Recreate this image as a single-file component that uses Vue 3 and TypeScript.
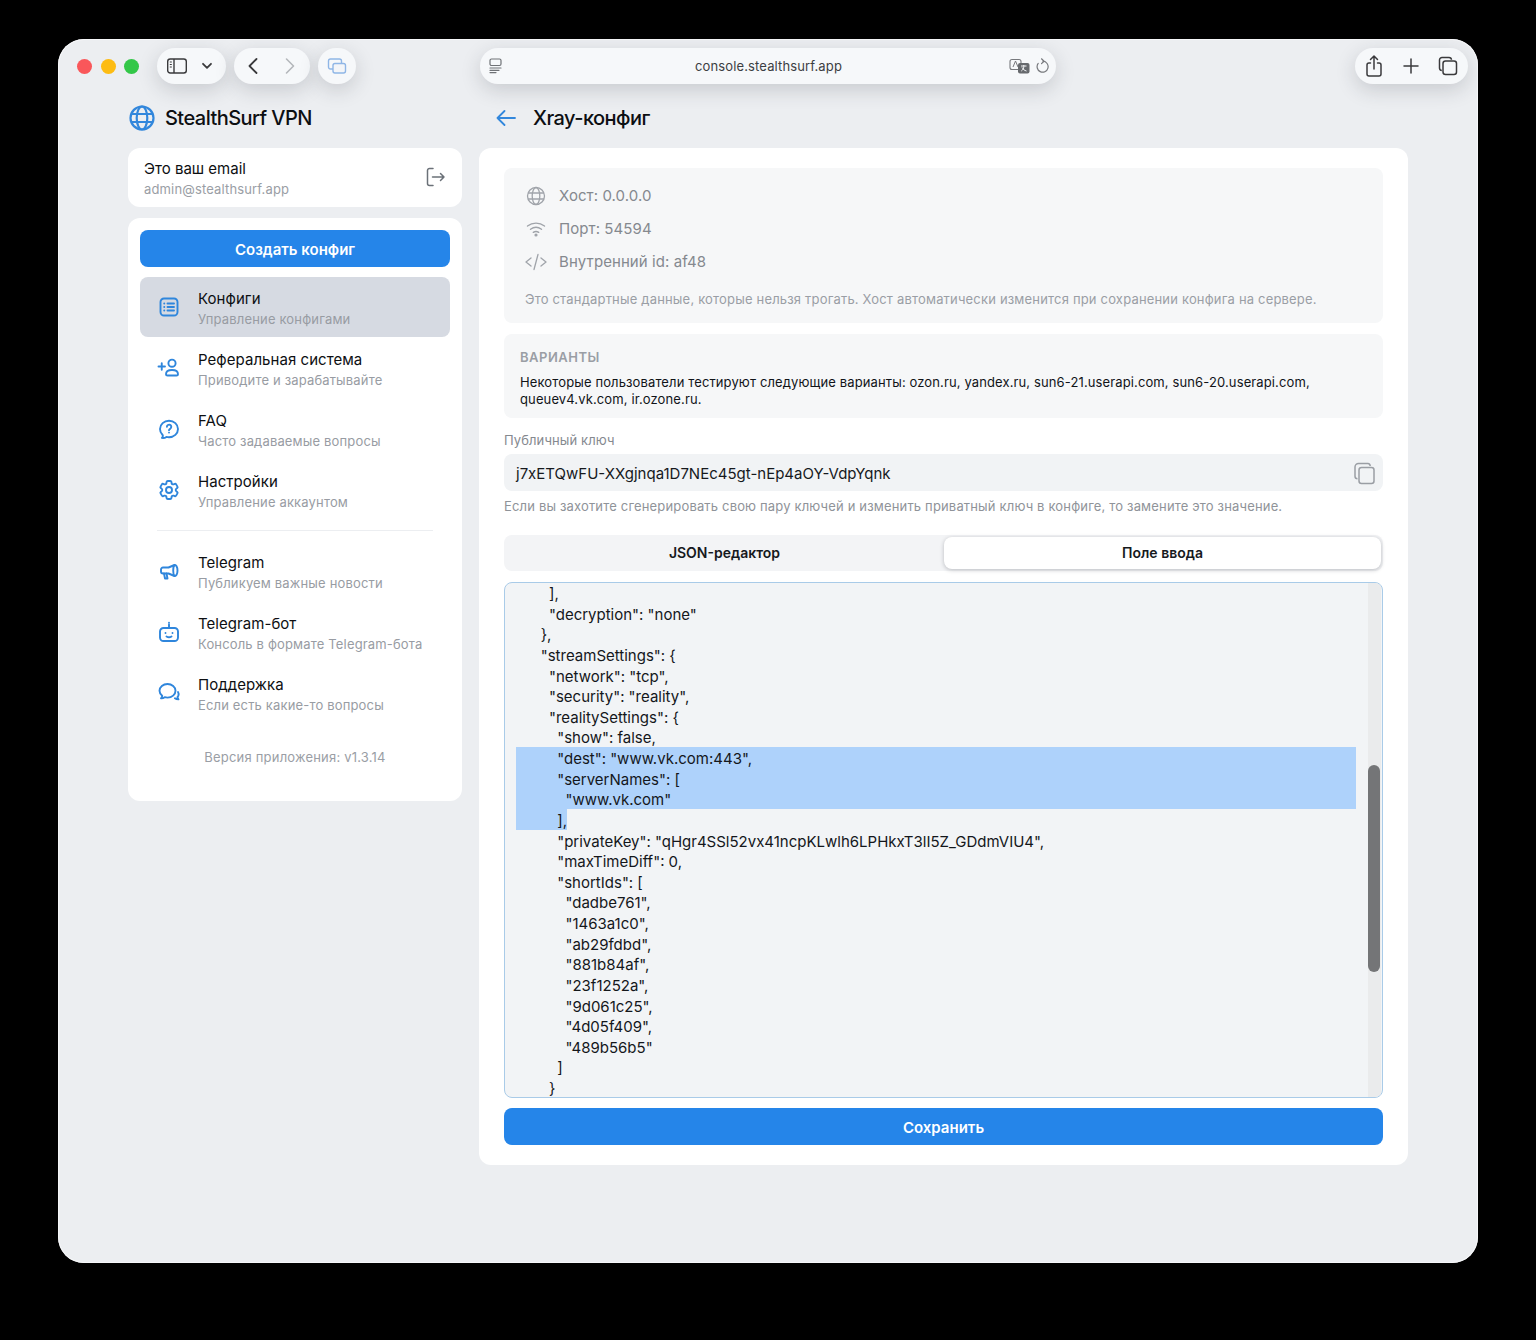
<script setup lang="ts">
interface NavItem {
  title: string
  sub: string
  paths: string[]
  active?: boolean
}

const cog =
  'M9.594 3.94c.09-.542.56-.94 1.11-.94h2.593c.55 0 1.02.398 1.11.94l.213 1.281c.063.374.313.686.645.87.074.04.147.083.22.127.324.196.72.257 1.075.124l1.217-.456a1.125 1.125 0 011.37.49l1.296 2.247a1.125 1.125 0 01-.26 1.431l-1.003.827c-.293.24-.438.613-.431.992a6.759 6.759 0 010 .255c-.007.378.138.75.43.99l1.005.828c.424.35.534.954.26 1.43l-1.298 2.247a1.125 1.125 0 01-1.369.491l-1.217-.456c-.355-.133-.75-.072-1.076.124a6.57 6.57 0 01-.22.128c-.331.183-.581.495-.644.869l-.213 1.28c-.09.543-.56.941-1.11.941h-2.594c-.55 0-1.02-.398-1.11-.94l-.213-1.281c-.062-.374-.312-.686-.644-.87a6.52 6.52 0 01-.22-.127c-.325-.196-.72-.257-1.076-.124l-1.217.456a1.125 1.125 0 01-1.369-.49l-1.297-2.247a1.125 1.125 0 01.26-1.431l1.004-.827c.292-.24.437-.613.43-.992a6.932 6.932 0 010-.255c.007-.378-.138-.75-.43-.99l-1.004-.828a1.125 1.125 0 01-.26-1.43l1.297-2.247a1.125 1.125 0 011.37-.491l1.216.456c.356.133.751.072 1.076-.124.072-.044.146-.087.22-.128.332-.183.582-.495.644-.869l.214-1.281z'

const navTop: NavItem[] = [
  {
    title: 'Конфиги',
    sub: 'Управление конфигами',
    active: true,
    paths: [
      'M7 3.500h10A3.500 3.500 0 0 1 20.500 7v10a3.500 3.500 0 0 1-3.500 3.500H7A3.500 3.500 0 0 1 3.500 17V7A3.500 3.500 0 0 1 7 3.500z',
      'M10.500 8.500h6.500M10.500 12h6.500M10.500 15.500h6.500',
      'M7.200 8.500h.1M7.200 12h.1M7.200 15.500h.1'
    ]
  },
  {
    title: 'Реферальная система',
    sub: 'Приводите и зарабатывайте',
    paths: [
      'M1.500 10.500h6.500M4.750 7.200v6.600',
      'M18.600 7.200a3.600 3.600 0 1 1-7.200 0 3.600 3.600 0 0 1 7.200 0z',
      'M9 18.200c0-2.600 2.400-4.200 6-4.200s6 1.600 6 4.200c0 .9-.6 1.300-1.500 1.300h-9C9.600 19.500 9 19.100 9 18.200z'
    ]
  },
  {
    title: 'FAQ',
    sub: 'Часто задаваемые вопросы',
    paths: [
      'M12 20.250c4.970 0 9-3.694 9-8.250s-4.030-8.250-9-8.250S3 7.444 3 12c0 2.104.859 4.023 2.273 5.480.432.447.74 1.040.586 1.641a4.483 4.483 0 01-.923 1.785A5.969 5.969 0 006 21c1.282 0 2.470-.402 3.445-1.087.81.22 1.668.337 2.555.337z',
      'M9.900 9.800a2.200 2.200 0 1 1 3.500 1.800c-.8.5-1.400.9-1.400 1.700',
      'M12 15.600h.01'
    ]
  },
  {
    title: 'Настройки',
    sub: 'Управление аккаунтом',
    paths: [cog, 'M15 12a3 3 0 11-6 0 3 3 0 016 0z']
  }
]

const navBottom: NavItem[] = [
  {
    title: 'Telegram',
    sub: 'Публикуем важные новости',
    paths: [
      'M6 8.500h5.500l6-2.500c1.500-.5 3 2 3 5.500s-1.500 6-3 5.500l-6-2.500H6a2 2 0 0 1-2-2v-2a2 2 0 0 1 2-2z',
      'M17.500 6c-.9 1-1.300 3-1.300 5.500s.4 4.500 1.300 5.500',
      'M7 14.500l1 5h2.500l-1-5'
    ]
  },
  {
    title: 'Telegram-бот',
    sub: 'Консоль в формате Telegram-бота',
    paths: [
      'M6.500 8h11A3.500 3.500 0 0 1 21 11.500v6a3.500 3.500 0 0 1-3.500 3.500h-11A3.500 3.500 0 0 1 3 17.500v-6A3.500 3.500 0 0 1 6.500 8z',
      'M12 8V4.500M12 2.800h.01',
      'M8.500 13h.01M15.500 13h.01',
      'M9.500 16.500c1.500.9 3.500.9 5 0'
    ]
  },
  {
    title: 'Поддержка',
    sub: 'Если есть какие-то вопросы',
    paths: [
      'M10.500 3c4.400 0 8 3 8 6.800s-3.600 6.800-8 6.800c-1 0-1.900-.1-2.800-.4-.9.7-2.300 1.200-3.700 1.100.7-.7 1.100-1.600 1.200-2.500C3.400 13.400 2.500 11.700 2.500 9.800 2.500 6 6.100 3 10.500 3z',
      'M21 11c.6 1 .8 2.300.4 3.500-.2.7-.5 1.200-.9 1.700.1.8.4 1.500 1 2.100-1.400 0-2.700-.3-3.600-1'
    ]
  }
]

interface CodeLine {
  text: string
  sel?: boolean
  partial?: boolean
}

const code: CodeLine[] = [
  { text: '        ],' },
  { text: '        "decryption": "none"' },
  { text: '      },' },
  { text: '      "streamSettings": {' },
  { text: '        "network": "tcp",' },
  { text: '        "security": "reality",' },
  { text: '        "realitySettings": {' },
  { text: '          "show": false,' },
  { text: '          "dest": "www.vk.com:443",', sel: true },
  { text: '          "serverNames": [', sel: true },
  { text: '            "www.vk.com"', sel: true },
  { text: '          ],', partial: true },
  { text: '          "privateKey": "qHgr4SSl52vx41ncpKLwlh6LPHkxT3lI5Z_GDdmVIU4",' },
  { text: '          "maxTimeDiff": 0,' },
  { text: '          "shortIds": [' },
  { text: '            "dadbe761",' },
  { text: '            "1463a1c0",' },
  { text: '            "ab29fdbd",' },
  { text: '            "881b84af",' },
  { text: '            "23f1252a",' },
  { text: '            "9d061c25",' },
  { text: '            "4d05f409",' },
  { text: '            "489b56b5"' },
  { text: '          ]' },
  { text: '        }' }
]
</script>

<template>
  <div class="screen">
    <div class="window">
      <header class="toolbar">
        <div class="tb-left">
          <div class="lights">
            <span class="light red"></span>
            <span class="light yellow"></span>
            <span class="light green"></span>
          </div>
          <div class="pill side-pill">
            <svg class="tb-ic" width="22" height="18" viewBox="0 0 22 18" fill="none" stroke="#3a3a3c" stroke-width="1.400">
              <rect x="1.700" y="2" width="18.600" height="14" rx="2.500" />
              <path d="M8 2v14" />
              <path d="M3.800 5h2M3.800 7.500h2M3.800 10h2" stroke-width="1.100" />
            </svg>
            <svg width="12" height="8" viewBox="0 0 12 8" fill="none" stroke="#3a3a3c" stroke-width="1.800" stroke-linecap="round" stroke-linejoin="round">
              <path d="M2 1.800l4 4 4-4" />
            </svg>
          </div>
          <div class="pill nav-pill">
            <svg width="12" height="18" viewBox="0 0 12 18" fill="none" stroke="#3a3a3c" stroke-width="1.800" stroke-linecap="round" stroke-linejoin="round">
              <path d="M9.500 2l-7 7 7 7" />
            </svg>
            <svg width="12" height="18" viewBox="0 0 12 18" fill="none" stroke="#b4b7bb" stroke-width="1.600" stroke-linecap="round" stroke-linejoin="round">
              <path d="M2.500 2l7 7-7 7" />
            </svg>
          </div>
          <div class="pill round-pill">
            <svg width="20" height="18" viewBox="0 0 20 18" fill="none" stroke="#8fb6e6" stroke-width="1.400">
              <rect x="1.500" y="2" width="13" height="10" rx="2" />
              <rect x="6" y="6.500" width="12.500" height="9.500" rx="2" fill="#f3f5f8" />
            </svg>
          </div>
        </div>
        <div class="pill url-pill">
          <svg class="url-page" width="16" height="18" viewBox="0 0 16 18" fill="none" stroke="#6f7276" stroke-width="1.200" stroke-linecap="round">
            <rect x="2" y="2" width="11" height="6.500" rx="1.500" />
            <path d="M2 11h11M2 13.300h9M2 15.600h6" />
          </svg>
          <span class="url-text">console.stealthsurf.app</span>
          <svg class="url-tr" width="22" height="16" viewBox="0 0 22 16" fill="none">
            <rect x="1" y="1.500" width="11" height="10" rx="2" stroke="#77797d" stroke-width="1.100" fill="#f6f8fa" />
            <path d="M4 9l2.500-6L9 9" stroke="#77797d" stroke-width="1" />
            <rect x="9" y="5" width="11.500" height="10.500" rx="2" fill="#66696d" />
            <path d="M12 8h5.500M14.800 7v1.500c0 2-1 3.500-2.500 4.500M13 9.500c1 1.700 2.500 3 4.500 3.500" stroke="#f6f8fa" stroke-width="1" />
          </svg>
          <svg class="url-re" width="14" height="16" viewBox="0 0 14 16" fill="none" stroke="#77797d" stroke-width="1.200" stroke-linecap="round" stroke-linejoin="round">
            <path d="M8 3.200a5.500 5.500 0 1 1-4.800 2.200" />
            <path d="M6.500 .8L9 3.200 6.500 5.600" />
          </svg>
        </div>
        <div class="pill right-pill">
          <svg width="20" height="24" viewBox="0 0 20 24" fill="none" stroke="#3a3a3c" stroke-width="1.500" stroke-linecap="round" stroke-linejoin="round">
            <path d="M6.500 9H5a2 2 0 0 0-2 2v9a2 2 0 0 0 2 2h10a2 2 0 0 0 2-2v-9a2 2 0 0 0-2-2h-1.500" />
            <path d="M10 15V2.500M6.500 5.500L10 2l3.500 3.500" />
          </svg>
          <svg width="18" height="18" viewBox="0 0 18 18" fill="none" stroke="#3a3a3c" stroke-width="1.500" stroke-linecap="round">
            <path d="M9 2v14M2 9h14" />
          </svg>
          <svg width="20" height="20" viewBox="0 0 20 20" fill="none" stroke="#3a3a3c" stroke-width="1.500">
            <path d="M3.800 14.500A2.500 2.500 0 0 1 1.500 12V4a2.500 2.500 0 0 1 2.500-2.500h7A2.500 2.500 0 0 1 13.500 3.800" />
            <rect x="5" y="5" width="13.500" height="13.500" rx="2.500" />
          </svg>
        </div>
      </header>

      <div class="content">
        <aside class="col-side">
          <div class="page-head logo-head">
            <svg width="28" height="28" viewBox="0 0 28 28" fill="none" stroke="#3287dc" stroke-width="2.200">
              <circle cx="14" cy="14" r="11.500" />
              <ellipse cx="14" cy="14" rx="5.300" ry="11.500" />
              <path d="M3.200 10h21.600M3.200 18h21.600" />
            </svg>
            <h1 class="page-title">StealthSurf VPN</h1>
          </div>

          <div class="card email-card">
            <div>
              <div class="email-title">Это ваш email</div>
              <div class="email-sub">admin@stealthsurf.app</div>
            </div>
            <svg class="logout-ic" width="24" height="24" viewBox="0 0 24 24" fill="none" stroke="#6b7178" stroke-width="1.500" stroke-linecap="round" stroke-linejoin="round">
              <path d="M10 3.500H6.500a2 2 0 0 0-2 2v13a2 2 0 0 0 2 2H10" />
              <path d="M9.500 12H21M17.500 8.500L21 12l-3.500 3.500" />
            </svg>
          </div>

          <nav class="card nav-card">
            <button class="btn-primary btn-create" type="button">Создать конфиг</button>
            <div class="nav-list first">
              <div v-for="item in navTop" :key="item.title" class="nav-item" :class="{ active: item.active }">
                <svg class="nav-ic" width="24" height="24" viewBox="0 0 24 24" fill="none" stroke="#2f86dc" stroke-width="1.900" stroke-linecap="round" stroke-linejoin="round">
                  <path v-for="d in item.paths" :key="d" :d="d" />
                </svg>
                <div class="nav-text">
                  <div class="nav-title">{{ item.title }}</div>
                  <div class="nav-sub">{{ item.sub }}</div>
                </div>
              </div>
            </div>
            <div class="divider"></div>
            <div class="nav-list">
              <div v-for="item in navBottom" :key="item.title" class="nav-item">
                <svg class="nav-ic" width="24" height="24" viewBox="0 0 24 24" fill="none" stroke="#2f86dc" stroke-width="1.900" stroke-linecap="round" stroke-linejoin="round">
                  <path v-for="d in item.paths" :key="d" :d="d" />
                </svg>
                <div class="nav-text">
                  <div class="nav-title">{{ item.title }}</div>
                  <div class="nav-sub">{{ item.sub }}</div>
                </div>
              </div>
            </div>
            <div class="version">Версия приложения: v1.3.14</div>
          </nav>
        </aside>

        <main class="col-main">
          <div class="page-head back-head">
            <svg width="22" height="20" viewBox="0 0 22 20" fill="none" stroke="#3287dc" stroke-width="1.800" stroke-linecap="round" stroke-linejoin="round">
              <path d="M20 10H2.500M9.500 3L2.500 10l7 7" />
            </svg>
            <h1 class="page-title">Xray-конфиг</h1>
          </div>

          <section class="card main-card">
            <div class="info-box">
              <div class="info-row">
                <svg width="22" height="22" viewBox="0 0 22 22" fill="none" stroke="#a0a4aa" stroke-width="1.300">
                  <circle cx="11" cy="11" r="8.500" />
                  <ellipse cx="11" cy="11" rx="3.800" ry="8.500" />
                  <path d="M3 8h16M3 14h16" />
                </svg>
                <span>Хост: 0.0.0.0</span>
              </div>
              <div class="info-row">
                <svg width="22" height="22" viewBox="0 0 22 22" fill="none" stroke="#a0a4aa" stroke-width="1.400" stroke-linecap="round">
                  <path d="M2.500 8c5-3.800 12-3.800 17 0M5.500 11.300c3.400-2.500 7.600-2.500 11 0M8.300 14.300c1.700-1 3.700-1 5.400 0" />
                  <circle cx="11" cy="17" r=".9" fill="#a0a4aa" />
                </svg>
                <span>Порт: 54594</span>
              </div>
              <div class="info-row">
                <svg width="22" height="22" viewBox="0 0 22 22" fill="none" stroke="#a0a4aa" stroke-width="1.300" stroke-linecap="round" stroke-linejoin="round">
                  <path d="M6 7l-5 4 5 4M16 7l5 4-5 4M13 3.500L9 18.500" />
                </svg>
                <span>Внутренний id: af48</span>
              </div>
              <p class="info-note">Это стандартные данные, которые нельзя трогать. Хост автоматически изменится при сохранении конфига на сервере.</p>
            </div>

            <div class="variants">
              <div class="variants-head">ВАРИАНТЫ</div>
              <p class="variants-text">Некоторые пользователи тестируют следующие варианты: ozon.ru, yandex.ru, sun6-21.userapi.com, sun6-20.userapi.com, queuev4.vk.com, ir.ozone.ru.</p>
            </div>

            <label class="field-label">Публичный ключ</label>
            <div class="key-input">
              <span class="key-value">j7xETQwFU-XXgjnqa1D7NEc45gt-nEp4aOY-VdpYqnk</span>
              <svg width="24" height="24" viewBox="0 0 24 24" fill="none" stroke="#9a9ea4" stroke-width="1.500">
                <path d="M5.500 17.800A2.500 2.500 0 0 1 3 15.300V6a3.500 3.500 0 0 1 3.500-3.500h9.300A2.500 2.500 0 0 1 18.200 5" />
                <rect x="7" y="6.500" width="15" height="16" rx="2.500" />
              </svg>
            </div>
            <p class="key-help">Если вы захотите сгенерировать свою пару ключей и изменить приватный ключ в конфиге, то замените это значение.</p>

            <div class="tabs">
              <div class="tab">JSON-редактор</div>
              <div class="tab tab-active">Поле ввода</div>
            </div>

            <div class="editor">
              <div class="code">
                <div
                  v-for="(line, i) in code"
                  :key="i"
                  class="code-line"
                  :class="{ sel: line.sel, partial: line.partial }"
                >{{ line.text }}</div>
              </div>
              <div class="scroll-track"><div class="scroll-thumb"></div></div>
            </div>

            <button class="btn-primary btn-save" type="button">Сохранить</button>
          </section>
        </main>
      </div>
    </div>
  </div>
</template>

<style scoped>
.screen {
  width: 1536px;
  height: 1340px;
  box-sizing: border-box;
  padding: 39px 58px 77px;
  background: #000;
  font-family: Inter, "Noto Sans", "Liberation Sans", sans-serif;
  color: #0d0f12;
}
.window {
  height: 100%;
  border-radius: 26px;
  background: #eceef1;
  box-shadow: inset 0 0 0 1px #f6f7f9;
  overflow: hidden;
}
.toolbar {
  display: flex;
  align-items: center;
  height: 36px;
  padding: 9px 10px 0 0;
}
.tb-left {
  flex: 0 0 422px;
  display: flex;
  align-items: center;
}
.lights {
  display: flex;
  gap: 8.500px;
  margin: 0 18px 0 19px;
}
.light {
  width: 15px;
  height: 15px;
  border-radius: 50%;
}
.red { background: #f9575a; }
.yellow { background: #fdbc13; }
.green { background: #33c748; }
.pill {
  height: 36px;
  border-radius: 18px;
  background: #f6f8fa;
  box-shadow: 0 6px 20px rgba(40, 45, 55, 0.18);
  display: flex;
  align-items: center;
  box-sizing: border-box;
}
.side-pill {
  width: 69px;
  padding: 0 13px 0 9px;
  justify-content: space-between;
}
.nav-pill {
  width: 76px;
  margin-left: 8px;
  padding: 0 14px 0 13px;
  justify-content: space-between;
}
.round-pill {
  width: 38px;
  margin-left: 8px;
  justify-content: center;
}
.url-pill {
  width: 576px;
  padding: 0 7px 0 8px;
  position: relative;
}
.url-text {
  flex: 1;
  text-align: center;
  font-size: 13px;
  letter-spacing: 0.13px;
  color: #3c3e42;
  padding-left: 24px;
}
.url-re { margin-left: 4px; }
.right-pill {
  width: 113px;
  margin-left: auto;
  padding: 0 10px 0 9px;
  justify-content: space-between;
}
.content {
  display: flex;
  gap: 17px;
  padding: 16px 70px 0;
}
.col-side {
  flex: 0 0 334px;
  display: flex;
  flex-direction: column;
}
.col-main {
  flex: 0 0 929px;
  display: flex;
  flex-direction: column;
}
.page-head {
  height: 36px;
  margin-bottom: 12px;
  display: flex;
  align-items: center;
}
.logo-head { gap: 9px; }
.back-head { gap: 16px; padding-left: 16px; }
.page-title {
  margin: 0;
  font-size: 20px;
  font-weight: 450;
  color: #0d0f12;
  letter-spacing: -0.55px;
}
.card {
  background: #fff;
  border-radius: 12px;
}
.email-card {
  height: 59px;
  box-sizing: border-box;
  display: flex;
  align-items: center;
  justify-content: space-between;
  padding: 2px 15px 0 16px;
  margin-bottom: 11px;
}
.logout-ic { margin-top: -4px; }
.email-title {
  font-size: 15px;
  line-height: 20px;
}
.email-sub {
  font-size: 13px;
  letter-spacing: 0.15px;
  line-height: 20px;
  color: #9a9ea5;
}
.nav-card {
  height: 583px;
  box-sizing: border-box;
  padding: 12px;
  display: flex;
  flex-direction: column;
}
.btn-primary {
  display: block;
  width: 100%;
  height: 37px;
  border: 0;
  border-radius: 8px;
  background: #2585e9;
  color: #fff;
  font-family: inherit;
  font-size: 15px;
  font-weight: 600;
  padding: 1px 0 0;
}
.nav-list {
  display: flex;
  flex-direction: column;
  gap: 1px;
}
.nav-list.first { margin-top: 10px; }
.nav-item {
  height: 60px;
  box-sizing: border-box;
  border-radius: 8px;
  display: flex;
  align-items: center;
  gap: 17px;
  padding-left: 17px;
}
.nav-item.active { background: #d6dae2; }
.nav-ic { flex: none; }
.nav-text { padding-top: 2px; }
.nav-title {
  font-size: 15px;
  letter-spacing: 0.05px;
  line-height: 21px;
  font-weight: 400;
}
.nav-sub {
  font-size: 13px;
  letter-spacing: 0.16px;
  line-height: 20px;
  color: #989ca3;
}
.divider {
  height: 1px;
  background: #eceef1;
  margin: 10px 17px;
}
.version {
  margin-top: 24px;
  text-align: center;
  font-size: 13px;
  letter-spacing: 0.2px;
  line-height: 20px;
  color: #9a9ea5;
}
.main-card {
  height: 1017px;
  box-sizing: border-box;
  padding: 20px 25px;
}
.info-box {
  height: 155px;
  box-sizing: border-box;
  background: #f6f7f8;
  border-radius: 8px;
  padding: 11px 21px 0;
}
.info-row {
  height: 33px;
  display: flex;
  align-items: center;
  gap: 12px;
  font-size: 15px;
  letter-spacing: 0.08px;
  color: #85898f;
}
.info-note {
  margin: 11px 0 0;
  font-size: 13px;
  letter-spacing: 0.18px;
  line-height: 20px;
  color: #9a9ea5;
}
.variants {
  height: 84px;
  box-sizing: border-box;
  margin-top: 11px;
  background: #f6f7f8;
  border-radius: 8px;
  padding: 13px 16px 0;
}
.variants-head {
  font-size: 13px;
  letter-spacing: 0.5px;
  line-height: 20px;
  font-weight: 600;
  color: #9a9ea5;
}
.variants-text {
  margin: 7px 0 0;
  font-size: 13px;
  letter-spacing: 0.12px;
  line-height: 16.500px;
  color: #111418;
}
.field-label {
  display: block;
  margin-top: 12px;
  font-size: 13px;
  letter-spacing: 0.1px;
  line-height: 20px;
  color: #85898f;
}
.key-input {
  height: 37px;
  margin-top: 4px;
  box-sizing: border-box;
  background: #f1f3f5;
  border-radius: 8px;
  display: flex;
  align-items: center;
  justify-content: space-between;
  padding: 0 7px 0 12px;
  font-size: 15px;
  color: #16191d;
}
.key-value { padding-top: 1px; }
.key-help {
  margin: 5px 0 0;
  font-size: 13px;
  letter-spacing: 0.165px;
  line-height: 20px;
  color: #8f9399;
}
.tabs {
  height: 36px;
  margin-top: 19px;
  box-sizing: border-box;
  background: #f3f4f6;
  border-radius: 8px;
  padding: 2px;
  display: flex;
  gap: 1px;
}
.tab {
  flex: 1;
  display: flex;
  align-items: center;
  justify-content: center;
  border-radius: 8px;
  font-size: 14px;
  font-weight: 600;
  color: #16191d;
  padding-bottom: 1px;
}
.tab-active {
  background: #fff;
  box-shadow: 0 1px 4px rgba(20, 25, 35, 0.26);
}
.editor {
  position: relative;
  height: 516px;
  margin-top: 11px;
  box-sizing: border-box;
  background: #f2f4f6;
  border: 1px solid #a9cbe8;
  border-radius: 8px;
  overflow: hidden;
}
.code {
  width: 840px;
  margin-top: -1px;
  padding-left: 11px;
  font-size: 15px;
  line-height: 20.625px;
  word-spacing: -0.1px;
  color: #14171b;
}
.code-line {
  white-space: pre;
  height: 20.625px;
  box-sizing: border-box;
  padding-top: 2px;
}
.code-line.sel { background: #aed2fb; }
.code-line.partial {
  width: fit-content;
  background: #aed2fb;
}
.scroll-track {
  position: absolute;
  top: 0;
  right: 1px;
  bottom: 0;
  width: 13px;
  background: #eaebec;
}
.scroll-thumb {
  position: absolute;
  top: 182px;
  left: 0;
  width: 12px;
  height: 207px;
  border-radius: 6px;
  background: #747577;
}
.btn-save {
  margin-top: 10px;
}
</style>

<style>
html,
body {
  margin: 0;
  background: #000;
}
</style>
